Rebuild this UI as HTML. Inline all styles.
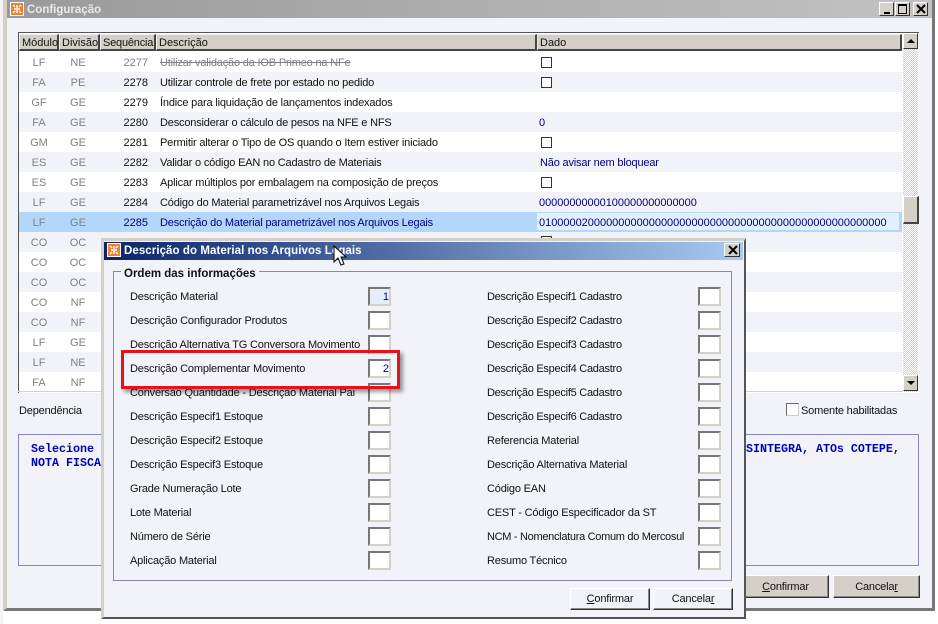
<!DOCTYPE html>
<html><head><meta charset="utf-8"><style>
html,body{margin:0;padding:0;background:#fff}
#p{position:relative;width:938px;height:624px;overflow:hidden;background:#fff;font:11px "Liberation Sans",sans-serif;color:#111}
#p div,#p span.a,#p svg{position:absolute}
.t{white-space:nowrap;line-height:14px;height:14px;margin-top:1px;letter-spacing:-.18px}
.r{left:19px;width:883px;height:20px}
.w{background:#fff}.l{background:#f1f3f9}
.g{color:#808080;text-align:center;white-space:nowrap;line-height:14px;height:14px;margin-top:1px}
.m{left:21px;width:36px}.d{left:59px;width:38px}
.s{left:100px;width:48px;text-align:right;white-space:nowrap;line-height:14px;height:14px;margin-top:1px}
.x{left:160px}.o{left:539px;color:#000080}
.c{left:541px;width:9px;height:9px;border:1px solid #333;background:#fff}
.h{top:34px;height:17px;background:#d4d0c8;border-top:1px solid #eee;border-left:1px solid #eee;border-right:2px solid #444;border-bottom:2px solid #444;line-height:16px;padding-left:2px;box-sizing:border-box;white-space:nowrap;color:#111}
.i{width:23px;height:19px;box-sizing:border-box;background:#fff;border:2px solid;border-color:#777 #d4d0c8 #d4d0c8 #777;color:#0000a0;text-align:right;line-height:17px;padding-right:0}
.b{box-sizing:border-box;text-align:center;border:1px solid;border-color:#fff #333 #333 #fff;box-shadow:inset -1px -1px 0 #888;line-height:21px;letter-spacing:-.18px}
.k{width:15px;height:14px;box-sizing:border-box;background:#d4d0c8;border:1px solid;border-color:#fff #333 #333 #fff}
.u{text-decoration:underline}
.q{font:bold 11.67px "Liberation Mono",monospace;color:#0000b8;white-space:nowrap;line-height:14px}
</style></head><body><div id="p">

<div style="left:0;top:0;width:3px;height:624px;background:#f4f4f4"></div>
<div style="left:3px;top:0;width:932px;height:611px;background:#f1f3f9;box-sizing:border-box;border-left:4px solid #d4d0c8;border-right:3px solid #777;border-bottom:3px solid #777"></div>
<div style="left:7px;top:0;width:925px;height:18px;background:linear-gradient(90deg,#9a9a9a,#c2c2c2)"></div>
<svg style="left:10px;top:2px" width="14" height="14" viewBox="0 0 14 14"><rect width="14" height="14" fill="#fff"/><rect x="1" y="1" width="12" height="12" fill="#f08030"/><path d="M3 3l2 2M11 3l-2 2M3 11l2-2M11 11l-2-2M7 3v3M4 7h6M7 8v3" stroke="#fff" stroke-width="1.4"/></svg>
<div class="t" style="left:27px;top:2px;font-weight:bold;color:#e9e9e9;font-size:11.5px;letter-spacing:0">Configuração</div>
<div class="k" style="left:879px;top:2px;width:15px;height:14px"><div style="left:4px;top:9px;width:6px;height:2px;background:#000"></div></div>
<div class="k" style="left:895px;top:2px"><div style="left:2px;top:1px;width:7px;height:7px;border:1px solid #000;border-top-width:2px"></div></div>
<div class="k" style="left:913px;top:2px"><svg style="left:2px;top:1px" width="10" height="10"><path d="M1 1l8 8M9 1l-8 8" stroke="#000" stroke-width="2"/></svg></div>

<!-- grid -->
<div style="left:18px;top:32px;width:901px;height:361px;background:#fff;border-top:1px solid #555;border-left:1px solid #555;box-sizing:border-box"></div>
<div class="h" style="left:19px;width:40px">Módulo</div>
<div class="h" style="left:59px;width:41px">Divisão</div>
<div class="h" style="left:100px;width:56px;letter-spacing:-.2px">Sequência</div>
<div class="h" style="left:156px;width:381px">Descrição</div>
<div class="h" style="left:537px;width:365px">Dado</div>

<div class="r w" style="top:52px"></div><div class="r l" style="top:72px"></div><div class="r w" style="top:92px"></div><div class="r l" style="top:112px"></div><div class="r w" style="top:132px"></div><div class="r l" style="top:152px"></div><div class="r w" style="top:172px"></div><div class="r l" style="top:192px"></div>
<div class="r" style="top:212px;background:#b2d7fb"></div><div style="left:537px;top:213px;width:362px;height:17px;background:#e2f1ff"></div>
<div class="r l" style="top:232px"></div><div class="r w" style="top:252px"></div><div class="r l" style="top:272px"></div><div class="r w" style="top:292px"></div><div class="r l" style="top:312px"></div><div class="r w" style="top:332px"></div><div class="r l" style="top:352px"></div><div class="r w" style="top:372px;height:20px"></div>

<div class="g m" style="top:55px">LF</div><div class="g d" style="top:55px">NE</div><div class="s" style="top:55px;color:#808080">2277</div><div class="t x" style="top:55px;color:#808080;text-decoration:line-through">Utilizar validação da IOB Primeo na NFe</div><div class="c" style="top:57px"></div>
<div class="g m" style="top:75px">FA</div><div class="g d" style="top:75px">PE</div><div class="s" style="top:75px">2278</div><div class="t x" style="top:75px">Utilizar controle de frete por estado no pedido</div><div class="c" style="top:77px"></div>
<div class="g m" style="top:95px">GF</div><div class="g d" style="top:95px">GE</div><div class="s" style="top:95px">2279</div><div class="t x" style="top:95px">Índice para liquidação de lançamentos indexados</div>
<div class="g m" style="top:115px">FA</div><div class="g d" style="top:115px">GE</div><div class="s" style="top:115px">2280</div><div class="t x" style="top:115px">Desconsiderar o cálculo de pesos na NFE e NFS</div><div class="t o" style="top:115px">0</div>
<div class="g m" style="top:135px">GM</div><div class="g d" style="top:135px">GE</div><div class="s" style="top:135px">2281</div><div class="t x" style="top:135px">Permitir alterar o Tipo de OS quando o Item estiver iniciado</div><div class="c" style="top:137px"></div>
<div class="g m" style="top:155px">ES</div><div class="g d" style="top:155px">GE</div><div class="s" style="top:155px">2282</div><div class="t x" style="top:155px">Validar o código EAN no Cadastro de Materiais</div><div class="t o" style="top:155px;left:540px">Não avisar nem bloquear</div>
<div class="g m" style="top:175px">ES</div><div class="g d" style="top:175px">GE</div><div class="s" style="top:175px">2283</div><div class="t x" style="top:175px">Aplicar múltiplos por embalagem na composição de preços</div><div class="c" style="top:177px"></div>
<div class="g m" style="top:195px">LF</div><div class="g d" style="top:195px">GE</div><div class="s" style="top:195px">2284</div><div class="t x" style="top:195px">Código do Material parametrizável nos Arquivos Legais</div><div class="t o" style="top:195px;letter-spacing:-.05px">00000000000100000000000000</div>
<div class="g m" style="top:215px">LF</div><div class="g d" style="top:215px">GE</div><div class="s" style="top:215px;color:#000080">2285</div><div class="t x" style="top:215px;color:#000080">Descrição do Material parametrizável nos Arquivos Legais</div><div class="t o" style="top:215px;letter-spacing:-.02px">010000020000000000000000000000000000000000000000000000000</div>
<div class="g m" style="top:235px">CO</div><div class="g d" style="top:235px">OC</div><div class="c" style="top:236px"></div>
<div class="g m" style="top:255px">CO</div><div class="g d" style="top:255px">OC</div>
<div class="g m" style="top:275px">CO</div><div class="g d" style="top:275px">OC</div>
<div class="g m" style="top:295px">CO</div><div class="g d" style="top:295px">NF</div>
<div class="g m" style="top:315px">CO</div><div class="g d" style="top:315px">NF</div>
<div class="g m" style="top:335px">LF</div><div class="g d" style="top:335px">GE</div>
<div class="g m" style="top:355px">LF</div><div class="g d" style="top:355px">NE</div>
<div class="g m" style="top:375px">FA</div><div class="g d" style="top:375px">NF</div>
<div style="left:18px;top:391px;width:885px;height:1px;background:#d4d0c8"></div>

<!-- scrollbar -->
<div style="left:903px;top:33px;width:15px;height:359px;background-color:#fff;background-image:conic-gradient(#d4d0c8 25%,#fff 0 50%,#d4d0c8 0 75%,#fff 0);background-size:2px 2px"></div>
<div class="k" style="left:903px;top:33px;width:15px;height:16px"><div style="left:3px;top:5px;width:0;height:0;border:4px solid transparent;border-bottom-color:#000;border-top:0"></div></div>
<div class="k" style="left:903px;top:375px;width:15px;height:16px"><div style="left:3px;top:5px;width:0;height:0;border:4px solid transparent;border-top-color:#000;border-bottom:0"></div></div>
<div class="k" style="left:903px;top:196px;width:16px;height:28px;border-right:2px solid #444;border-bottom:2px solid #444"></div>

<!-- lower main -->
<div class="t" style="left:19px;top:403px">Dependência</div>
<div style="left:786px;top:403px;width:11px;height:11px;border:1px solid;border-color:#666 #ccc #ccc #666;background:#fff"></div>
<div class="t" style="left:801px;top:403px">Somente habilitadas</div>
<div style="left:18px;top:434px;width:901px;height:132px;box-sizing:border-box;border:1px solid #8484c8"></div>
<div class="q" style="left:31px;top:442px">Selecione</div>
<div class="q" style="left:31px;top:456px">NOTA FISCA</div>
<div class="q" style="left:746px;top:442px">SINTEGRA, ATOs COTEPE,</div>
<div class="b" style="left:742px;top:575px;width:87px;height:23px;background:#d4d0c8;padding-top:1px"><span class="u">C</span>onfirmar</div>
<div class="b" style="left:833px;top:575px;width:87px;height:23px;background:#d4d0c8;padding-top:1px">Cancela<span class="u">r</span></div>

<!-- modal -->
<div style="left:101px;top:238px;width:645px;height:381px;box-sizing:border-box;background:#f1f3f9;border:3px solid #d4d0c8;border-right:2px solid #555;border-bottom:2px solid #555"></div>
<div style="left:104px;top:242px;width:639px;height:18px;background:linear-gradient(90deg,#0a246a,#a6caf0)"></div>
<svg style="left:107px;top:243px" width="14" height="14" viewBox="0 0 14 14"><rect width="14" height="14" fill="#fff"/><rect x="1" y="1" width="12" height="12" fill="#f08030"/><path d="M3 3l2 2M11 3l-2 2M3 11l2-2M11 11l-2-2M7 3v3M4 7h6M7 8v3" stroke="#fff" stroke-width="1.4"/></svg>
<div class="t" style="left:124px;top:243px;font-weight:bold;color:#fff;font-size:11.5px;letter-spacing:.07px">Descrição do Material nos Arquivos Legais</div>
<div class="k" style="left:724px;top:243px;width:16px;height:14px"><svg style="left:3px;top:1px" width="10" height="10"><path d="M1 1l8 8M9 1l-8 8" stroke="#000" stroke-width="2"/></svg></div>
<div style="left:113px;top:271px;width:619px;height:310px;box-sizing:border-box;border:1px solid #8484c8"></div>
<div class="t" style="left:121px;top:266px;padding:0 3px;background:#f1f3f9;font-weight:bold;font-size:11.5px;letter-spacing:0">Ordem das informações</div>

<div class="t" style="left:130px;top:289px">Descrição Material</div><div class="i" style="left:368px;top:287px;background:#e4eefb">1</div>
<div class="t" style="left:130px;top:313px">Descrição Configurador Produtos</div><div class="i" style="left:368px;top:311px"></div>
<div class="t" style="left:130px;top:337px">Descrição Alternativa TG Conversora Movimento</div><div class="i" style="left:368px;top:335px"></div>
<div class="t" style="left:130px;top:361px">Descrição Complementar Movimento</div><div class="i" style="left:368px;top:359px">2</div>
<div class="t" style="left:130px;top:385px">Conversão Quantidade -  Descrição Material Pai</div><div class="i" style="left:368px;top:383px"></div>
<div class="t" style="left:130px;top:409px">Descrição Especif1 Estoque</div><div class="i" style="left:368px;top:407px"></div>
<div class="t" style="left:130px;top:433px">Descrição Especif2 Estoque</div><div class="i" style="left:368px;top:431px"></div>
<div class="t" style="left:130px;top:457px">Descrição Especif3 Estoque</div><div class="i" style="left:368px;top:455px"></div>
<div class="t" style="left:130px;top:481px">Grade Numeração Lote</div><div class="i" style="left:368px;top:479px"></div>
<div class="t" style="left:130px;top:505px">Lote Material</div><div class="i" style="left:368px;top:503px"></div>
<div class="t" style="left:130px;top:529px">Número de Série</div><div class="i" style="left:368px;top:527px"></div>
<div class="t" style="left:130px;top:553px">Aplicação Material</div><div class="i" style="left:368px;top:551px"></div>

<div class="t" style="left:487px;top:289px;letter-spacing:-.26px">Descrição Especif1 Cadastro</div><div class="i" style="left:698px;top:287px"></div>
<div class="t" style="left:487px;top:313px;letter-spacing:-.26px">Descrição Especif2 Cadastro</div><div class="i" style="left:698px;top:311px"></div>
<div class="t" style="left:487px;top:337px;letter-spacing:-.26px">Descrição Especif3 Cadastro</div><div class="i" style="left:698px;top:335px"></div>
<div class="t" style="left:487px;top:361px;letter-spacing:-.26px">Descrição Especif4 Cadastro</div><div class="i" style="left:698px;top:359px"></div>
<div class="t" style="left:487px;top:385px;letter-spacing:-.26px">Descrição Especif5 Cadastro</div><div class="i" style="left:698px;top:383px"></div>
<div class="t" style="left:487px;top:409px;letter-spacing:-.26px">Descrição Especif6 Cadastro</div><div class="i" style="left:698px;top:407px"></div>
<div class="t" style="left:487px;top:433px">Referencia Material</div><div class="i" style="left:698px;top:431px"></div>
<div class="t" style="left:487px;top:457px">Descrição Alternativa Material</div><div class="i" style="left:698px;top:455px"></div>
<div class="t" style="left:487px;top:481px">Código EAN</div><div class="i" style="left:698px;top:479px"></div>
<div class="t" style="left:487px;top:505px">CEST - Código Especificador da ST</div><div class="i" style="left:698px;top:503px"></div>
<div class="t" style="left:487px;top:529px;letter-spacing:-.3px">NCM - Nomenclatura Comum do Mercosul</div><div class="i" style="left:698px;top:527px"></div>
<div class="t" style="left:487px;top:553px">Resumo Técnico</div><div class="i" style="left:698px;top:551px"></div>

<div class="b" style="left:570px;top:588px;width:80px;height:22px;background:#f1f3f9"><span class="u">C</span>onfirmar</div>
<div class="b" style="left:653px;top:588px;width:80px;height:22px;background:#f1f3f9">Cancela<span class="u">r</span></div>

<!-- red highlight -->
<div style="left:121px;top:350px;width:279px;height:39px;box-sizing:border-box;border:3px solid #e8101a;box-shadow:3px 3px 4px rgba(0,0,0,.4)"></div>

<!-- cursor -->
<svg style="left:333px;top:245px" width="14" height="22" viewBox="0 0 14 22"><path d="M1 1v16l4-4 3 7 3-1-3-7h5z" fill="#fff" stroke="#000" stroke-width="1"/></svg>
</div></body></html>
